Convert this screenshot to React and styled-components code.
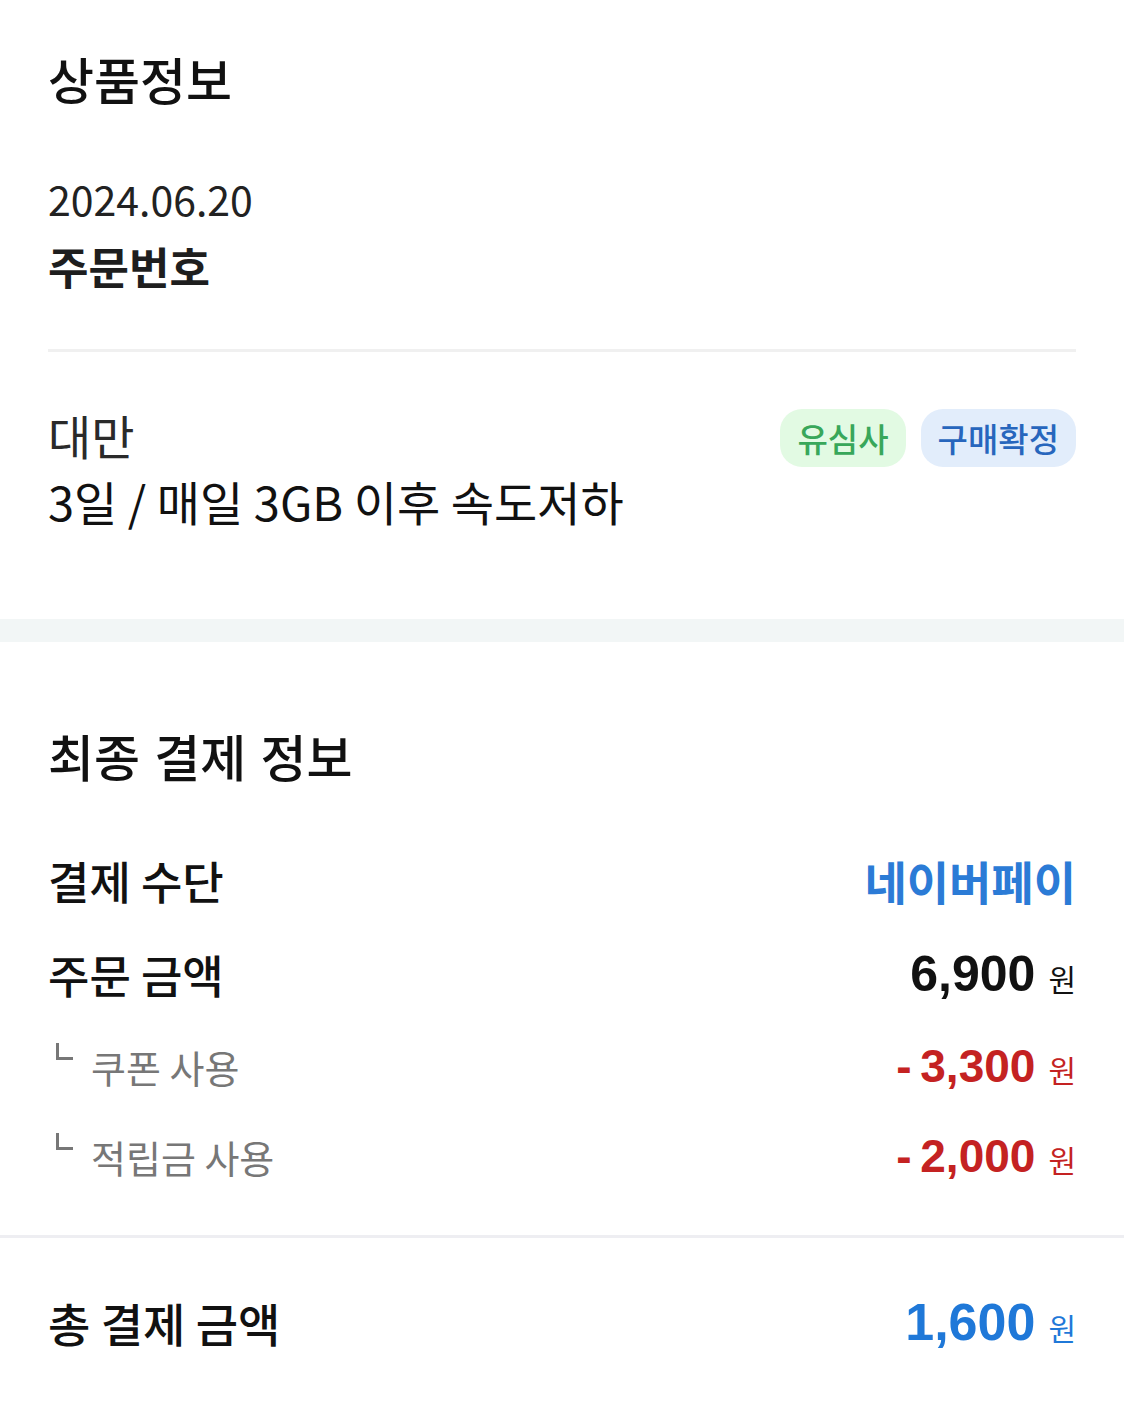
import React from "react"
import styled, { createGlobalStyle } from "styled-components"

const GlobalStyle = createGlobalStyle`
  html, body {
    margin: 0;
    padding: 0;
    background: #ffffff;
  }
  body {
    font-family: "Noto Sans CJK KR", "Noto Sans", sans-serif;
    color: #111111;
  }
`

const Page = styled.main`
  width: 1124px;
  min-height: 1416px;
  background: #fff;
`

const Section = styled.section`
  padding: ${(p) => p.$padding || "0 48px"};
`

const Title = styled.h2`
  margin: 0;
  font-size: 50px;
  line-height: 56px;
  font-weight: 500;
  color: #111;
  word-spacing: 3px;
`

const DateText = styled.div`
  margin-top: 67px;
  font-size: 41px;
  line-height: 50px;
  font-weight: 400;
  color: #222;
`

const OrderNo = styled.div`
  margin-top: 18px;
  font-size: 44px;
  line-height: 50px;
  font-weight: 700;
  color: #1e1e1e;
`

const Divider = styled.hr`
  margin: ${(p) => p.$margin || "0"};
  border: 0;
  height: 3px;
  background: ${(p) => p.$color || "#f0f0f0"};
`

const Product = styled.div`
  display: flex;
  justify-content: space-between;
  align-items: flex-start;
  padding: 57px 0 92px;
`

const ProductInfo = styled.div`
  display: flex;
  flex-direction: column;
  gap: 14px;
`

const ProductLine = styled.div`
  font-size: 47px;
  line-height: 52px;
  color: ${(p) => (p.$muted ? "#2a2a2a" : "#111")};
`

const Badges = styled.div`
  display: flex;
  gap: 15px;
`

const Badge = styled.span`
  display: inline-flex;
  align-items: center;
  height: 58px;
  padding: 0 17px;
  border-radius: 22px;
  font-size: 33px;
  font-weight: 500;
  background: ${(p) => (p.$tone === "green" ? "#e2fae3" : "#e2edfb")};
  color: ${(p) => (p.$tone === "green" ? "#38a75a" : "#2766bd")};
`

const Band = styled.div`
  height: 23px;
  background: #f2f6f6;
`

const Rows = styled.div`
  display: flex;
  flex-direction: column;
  gap: 34px;
  margin-top: 67px;
`

const Row = styled.div`
  display: flex;
  justify-content: space-between;
  align-items: center;
  height: ${(p) => (p.$sub ? "56px" : "60px")};
`

const Label = styled.div`
  display: flex;
  align-items: center;
  font-size: ${(p) => (p.$sub ? "38px" : "45px")};
  font-weight: ${(p) => (p.$sub ? 400 : 500)};
  color: ${(p) => (p.$sub ? "#777" : "#111")};
`

const Corner = styled.span`
  display: inline-block;
  align-self: flex-start;
  width: 14px;
  height: 14px;
  margin: 4px 18px 0 8px;
  border-left: 3px solid #777;
  border-bottom: 3px solid #777;
`

const Pay = styled.div`
  font-size: 46px;
  font-weight: 700;
  color: #2b7bd6;
`

const Amount = styled.div`
  display: flex;
  align-items: baseline;
  gap: 13px;
  color: ${(p) => p.$color || "#111"};
`

const Num = styled.span`
  font-family: "Liberation Sans", Arial, sans-serif;
  font-size: ${(p) => p.$size || "50px"};
  font-weight: 700;
  word-spacing: -4px;
`

const Won = styled.span`
  font-size: 30px;
  font-weight: 400;
`

const TotalLabel = styled(Label)`
  font-size: 46px;
`

const items = [
  { label: "쿠폰 사용", value: "- 3,300" },
  { label: "적립금 사용", value: "- 2,000" },
]

export default function App() {
  return (
    <Page>
      <GlobalStyle />
      <Section $padding="50px 48px 0">
        <Title>상품정보</Title>
        <DateText>2024.06.20</DateText>
        <OrderNo>주문번호</OrderNo>
        <Divider $margin="58px 0 0" />
        <Product>
          <ProductInfo>
            <ProductLine $muted>대만</ProductLine>
            <ProductLine>3일 / 매일 3GB 이후 속도저하</ProductLine>
          </ProductInfo>
          <Badges>
            <Badge $tone="green">유심사</Badge>
            <Badge $tone="blue">구매확정</Badge>
          </Badges>
        </Product>
      </Section>
      <Band />
      <Section $padding="85px 48px 0">
        <Title>최종 결제 정보</Title>
        <Rows>
          <Row>
            <Label>결제 수단</Label>
            <Pay>네이버페이</Pay>
          </Row>
          <Row>
            <Label>주문 금액</Label>
            <Amount>
              <Num>6,900</Num>
              <Won>원</Won>
            </Amount>
          </Row>
          {items.map((item) => (
            <Row $sub key={item.label}>
              <Label $sub>
                <Corner />
                {item.label}
              </Label>
              <Amount $color="#c42222">
                <Num $size="46px">{item.value}</Num>
                <Won>원</Won>
              </Amount>
            </Row>
          ))}
        </Rows>
      </Section>
      <Divider $margin="51px 0 0" $color="#eeeef2" />
      <Section $padding="54px 48px 60px">
        <Row>
          <TotalLabel>총 결제 금액</TotalLabel>
          <Amount $color="#1f78d8">
            <Num $size="52px">1,600</Num>
            <Won>원</Won>
          </Amount>
        </Row>
      </Section>
    </Page>
  )
}
